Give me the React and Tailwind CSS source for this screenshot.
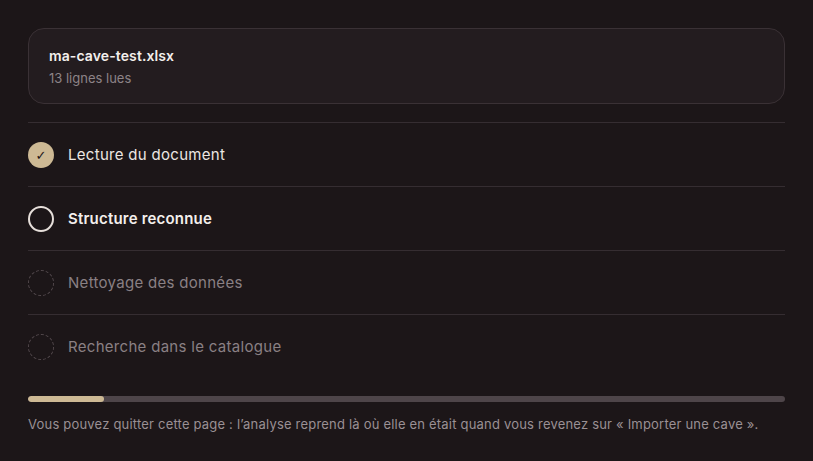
const steps = [
  { label: 'Lecture du document', state: 'done' },
  { label: 'Structure reconnue', state: 'active' },
  { label: 'Nettoyage des données', state: 'todo' },
  { label: 'Recherche dans le catalogue', state: 'todo' },
]

const StepIcon = ({ state }) => {
  if (state === 'done') {
    return (
      <span className="flex h-[26px] w-[26px] items-center justify-center rounded-full bg-[#cdb994] font-['DejaVu_Sans',sans-serif] text-[13px] leading-none text-[#1c1517]">
        ✓
      </span>
    )
  }
  if (state === 'active') {
    return <span className="block h-[26px] w-[26px] rounded-full border-2 border-[#e6dfda]" />
  }
  return <span className="block h-[26px] w-[26px] rounded-full border border-dashed border-[#544a4e]" />
}

export default function App() {
  return (
    <div className="min-h-[461px] bg-[#1c1618] px-[28px] pt-[28px] font-['Inter',sans-serif]">
      <div className="w-[757px]">
        <div className="rounded-[16px] border border-[#3a3135] bg-[#231c1f] px-[20px] pt-[17px] pb-[16px]">
          <div className="text-[14px] font-semibold leading-[20px] tracking-[0.1px] text-[#f3efec]">ma-cave-test.xlsx</div>
          <div className="mt-[3px] text-[13px] leading-[18px] text-[#8d8387]">13 lignes lues</div>
        </div>

        <div className="mt-[18px]">
          {steps.map((s) => (
            <div
              key={s.label}
              className="flex h-[64px] items-center gap-[14px] border-t border-[#352d31] pt-[1px]"
            >
              <StepIcon state={s.state} />
              <span
                className={
                  s.state === 'done'
                    ? 'text-[15px] tracking-[0.3px] text-[#ece6e2]'
                    : s.state === 'active'
                      ? 'text-[15px] font-semibold tracking-[0.2px] text-[#f3efec]'
                      : 'text-[15px] tracking-[0.3px] text-[#8a8084]'
                }
              >
                {s.label}
              </span>
            </div>
          ))}
        </div>

        <div className="mt-[18px] h-[6px] w-full overflow-hidden rounded-full bg-[#4e4549]">
          <div className="h-full w-[76px] rounded-full bg-[#cdb994]" />
        </div>

        <p className="mt-[13px] text-[13px] leading-[18px] tracking-[0.2px] text-[#9a9094]">
          Vous pouvez quitter cette page : l’analyse reprend là où elle en était quand vous revenez sur « Importer une cave ».
        </p>
      </div>
    </div>
  )
}
